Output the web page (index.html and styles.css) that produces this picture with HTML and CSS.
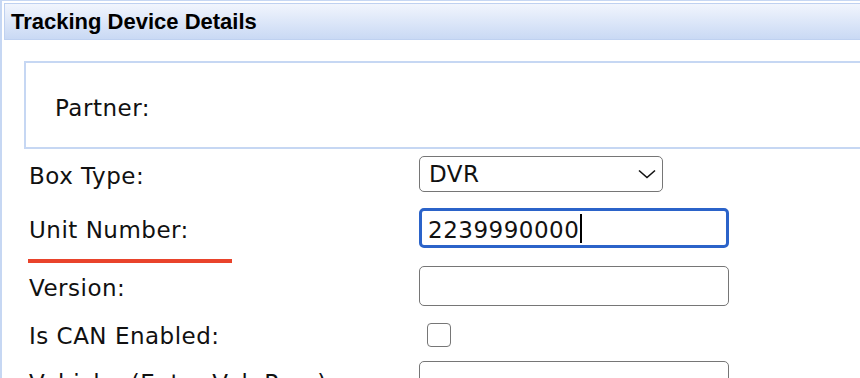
FILE: index.html
```html
<!DOCTYPE html>
<html lang="en">
<head>
    <meta charset="UTF-8">
    <meta name="viewport" content="width=device-width, initial-scale=1.0">
    <title>Tracking Device Details</title>
    <link rel="stylesheet" href="styles.css">
</head>
<body>

    <div class="panel">
        <div class="panel-head">Tracking Device Details</div>

        <div class="panel-body">
            <div class="partner-box">
                <span class="label">Partner:</span>
            </div>

            <div class="form-rows">
                <div class="row">
                    <label class="label">Box Type:</label>
                    <span class="select-wrap">
                        <select class="select">
                            <option>DVR</option>
                        </select>
                        <svg class="chevron" width="18" height="10" viewBox="0 0 18 10">
                            <path d="M1 1.5 L9 8.5 L17 1.5" fill="none" stroke="#111" stroke-width="1.6"/>
                        </svg>
                    </span>
                </div>

                <div class="row">
                    <label class="label marked">Unit Number:</label>
                    <div class="field focused">2239990000<span class="caret"></span></div>
                </div>

                <div class="row row-version">
                    <label class="label">Version:</label>
                    <input class="field" type="text">
                </div>

                <div class="row row-check">
                    <label class="label">Is CAN Enabled:</label>
                    <span class="check"></span>
                </div>

                <div class="row">
                    <label class="label">Vehicle: (Enter Veh Reg.)</label>
                    <input class="field" type="text">
                </div>
            </div>
        </div>
    </div>

</body>
</html>
```

FILE: styles.css
```css
html, body { margin: 0; padding: 0; background: #fff; overflow: hidden; }
body { width: 860px; height: 378px; }

.panel { width: 1100px; border-top: 1px solid #c6d7f3; border-left: 2px solid #c6d7f3; padding: 2px 0 0 2px; }
.panel-head { height: 35px; border: 1px solid #bfd1f0; background: linear-gradient(to bottom, #f1f5fd, #c9d9f4); font-family: "Liberation Sans", Arial, sans-serif; font-weight: bold; font-size: 22px; line-height: 35px; padding-left: 6px; color: #000; }

.panel-body { padding: 21px 0 0 20px; }
.partner-box { height: 84px; border: 2px solid #c6d7f3; padding-left: 29px; display: flex; align-items: center; }
.partner-box .label { padding-top: 6px; }

.label { font-family: "DejaVu Sans", Verdana, sans-serif; font-size: 23px; letter-spacing: 0.5px; color: #111; padding-top: 3px; }

.form-rows { display: flex; flex-direction: column; gap: 16px; padding: 7px 0 0 5px; }
.row { display: flex; align-items: center; }
.row .label { width: 390px; flex: none; }
.row-version { margin-top: 2px; }
.row-check { margin-top: -2px; margin-bottom: -4px; }

.marked { position: relative; }
.marked::after { content: ""; position: absolute; left: -1px; top: 45px; width: 204px; height: 4px; background: #e9432b; }

.select-wrap { position: relative; display: inline-block; }
.select { appearance: none; -webkit-appearance: none; width: 244px; height: 36px; border: 1.5px solid #767676; border-radius: 5px; background: #fff; font-family: "DejaVu Sans", Verdana, sans-serif; font-size: 23px; letter-spacing: 0.5px; color: #111; padding: 0 0 0 9px; }
.chevron { position: absolute; right: 7px; top: 13px; pointer-events: none; }

.field { box-sizing: border-box; width: 310px; height: 40px; border: 1.5px solid #767676; border-radius: 5px; background: #fff; font-family: "DejaVu Sans", Verdana, sans-serif; font-size: 23px; letter-spacing: 0.5px; color: #111; padding: 0 0 0 8px; }
div.field { display: flex; align-items: center; padding-top: 3px; }
.focused { border: 3px solid #2b63c9; padding-left: 6px; }
.caret { display: inline-block; width: 2px; height: 29px; background: #000; margin-left: 1px; margin-top: -3px; }

.check { display: inline-block; width: 22px; height: 22px; border: 1.5px solid #767676; border-radius: 4px; margin-left: 8px; background: #fff; }
```
